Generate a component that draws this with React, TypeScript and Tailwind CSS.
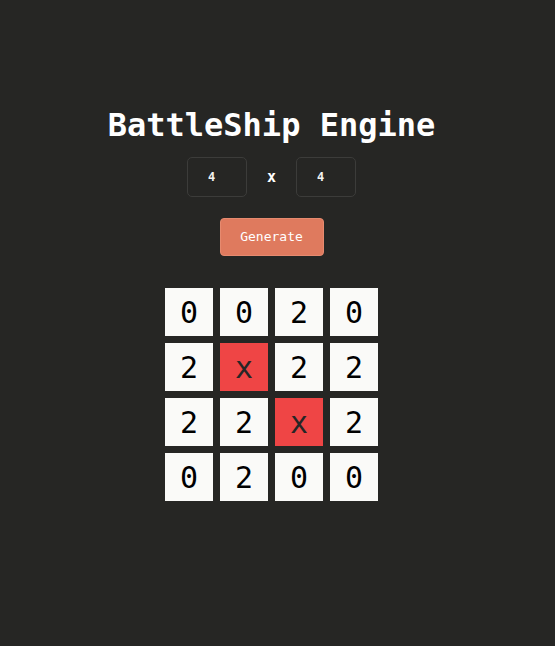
const BOARD: string[][] = [
  ['0', '0', '2', '0'],
  ['2', 'x', '2', '2'],
  ['2', '2', 'x', '2'],
  ['0', '2', '0', '0'],
]

function Cell({ value }: { value: string }) {
  const hit = value === 'x'
  return (
    <div
      className={
        hit
          ? 'flex h-[48px] w-[48px] items-center justify-center bg-[#ef4545] text-[30px] text-[#262626]'
          : 'flex h-[48px] w-[48px] items-center justify-center bg-[#fafaf8] text-[30px] text-black'
      }
    >
      {value}
    </div>
  )
}

export default function App() {
  return (
    <div
      className="flex min-h-screen flex-col items-center bg-[#262624] pr-[12px] pt-[106px] text-white"
      style={{ fontFamily: '"DejaVu Sans Mono", "Liberation Mono", monospace' }}
    >
      <h1 className="text-[32px] font-bold leading-[38px]">BattleShip Engine</h1>

      <div className="mt-[13px] flex items-center gap-[20px]">
        <input
          defaultValue="4"
          className="h-[40px] w-[60px] rounded-[5px] border border-[#3c3c3a] bg-transparent px-[20px] text-[12px] font-bold text-[#f2f2f2] outline-none"
        />
        <span className="text-[15px] font-bold">x</span>
        <input
          defaultValue="4"
          className="h-[40px] w-[60px] rounded-[5px] border border-[#3c3c3a] bg-transparent px-[20px] text-[12px] font-bold text-[#f2f2f2] outline-none"
        />
      </div>

      <button className="mt-[21px] h-[38px] w-[104px] rounded-[4px] border border-[#e68a6f] bg-[#df7a5e] text-[13px] text-white">
        Generate
      </button>

      <div className="mt-[32px] grid grid-cols-4 gap-[7px]">
        {BOARD.flatMap((row, r) => row.map((v, c) => <Cell key={`${r}-${c}`} value={v} />))}
      </div>
    </div>
  )
}
